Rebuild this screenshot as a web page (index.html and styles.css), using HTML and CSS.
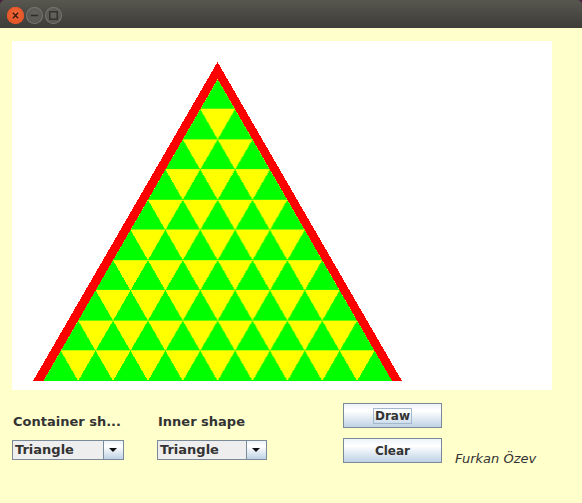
FILE: index.html
```html
<!DOCTYPE html>
<html>
<head>
<meta charset="utf-8">
<link rel="stylesheet" href="styles.css">
</head>
<body>
<div class="window">
  <div class="titlebar">
    <span class="wbtn close"><svg width="16" height="16" viewBox="0 0 16 16"><path d="M5.5 5.5 L10.5 10.5 M10.5 5.5 L5.5 10.5" stroke="#3a1a0e" stroke-width="1.3" fill="none"/></svg></span>
    <span class="wbtn"><svg width="16" height="16" viewBox="0 0 16 16"><path d="M4.5 8 H11.5" stroke="#2e2d2a" stroke-width="1.5" fill="none"/></svg></span>
    <span class="wbtn"><svg width="16" height="16" viewBox="0 0 16 16"><rect x="4.5" y="4.5" width="7" height="7" stroke="#2e2d2a" stroke-width="1.2" fill="none"/></svg></span>
  </div>
  <div class="content">
    <div class="canvas">
      <svg width="540" height="349" viewBox="0 0 540 349" shape-rendering="crispEdges">
        <defs>
          <pattern id="tri" patternUnits="userSpaceOnUse" x="205.65" y="38" width="34.87" height="60.4">
            <path fill="#ffff00" d="M0,0 L34.87,0 L17.435,30.2 Z M-17.435,30.2 L17.435,30.2 L0,60.4 Z M17.435,30.2 L52.305,30.2 L34.87,60.4 Z"/>
          </pattern>
        </defs>
        <polygon points="205.5,21 21,340 390,340" fill="#ff0000"/>
        <polygon points="205.65,38 31.3,340 380,340" fill="#00ff00"/>
        <polygon points="205.65,38 31.3,340 380,340" fill="url(#tri)"/>
      </svg>
    </div>
    <div class="controls">
      <div class="col col-container">
        <div class="label">Container sh...</div>
        <div class="combo combo-wide"><span class="combo-text">Triangle</span><span class="combo-arrow"></span></div>
      </div>
      <div class="col col-inner">
        <div class="label">Inner shape</div>
        <div class="combo combo-narrow"><span class="combo-text">Triangle</span><span class="combo-arrow"></span></div>
      </div>
      <div class="col col-buttons">
        <div class="button"><span class="focus">Draw</span></div>
        <div class="button">Clear</div>
      </div>
      <div class="col col-author">
        <div class="author">Furkan Özev</div>
      </div>
    </div>
  </div>
</div>
</body>
</html>
```
FILE: styles.css
```css
html, body {
  margin: 0;
  padding: 0;
}
body {
  background: #ffffcc;
  width: 582px;
  height: 503px;
  overflow: hidden;
  font-family: "DejaVu Sans", sans-serif;
}
.window {
  height: 503px;
  background: linear-gradient(#4a2140 0, #4a2140 6px, #ffffcc 6px);
}
.titlebar {
  height: 28px;
  background: linear-gradient(#57564f, #3d3c38);
  border-radius: 5px 5px 0 0;
  display: flex;
  align-items: center;
  padding-left: 7px;
  gap: 2px;
  box-sizing: border-box;
}
.wbtn {
  width: 17px;
  height: 17px;
  border-radius: 50%;
  background: radial-gradient(circle at 50% 40%, #64635e, #51504b);
  box-shadow: inset 0 0 0 1px #76756f;
  display: flex;
  align-items: center;
  justify-content: center;
  margin-top: 2px;
}
.wbtn svg {
  width: 17px;
  height: 17px;
}
.wbtn.close {
  background: radial-gradient(circle at 50% 40%, #f26a3c, #df4a1c);
  box-shadow: inset 0 0 0 1px #e8582a;
}
.content {
  background: #ffffcc;
  padding: 13px 0 0 12px;
}
.canvas {
  width: 540px;
  height: 349px;
  background: #ffffff;
}
.canvas svg {
  display: block;
}
.controls {
  display: flex;
  margin-top: 13px;
}
.col {
  display: flex;
  flex-direction: column;
}
.col-container {
  width: 145px;
}
.col-inner {
  width: 186px;
}
.col-buttons {
  width: 112px;
  gap: 10px;
}
.label {
  font-size: 13px;
  font-weight: bold;
  color: #333333;
  line-height: 15px;
  margin-top: 11px;
  padding-left: 1px;
}
.combo {
  margin-top: 11px;
  height: 20px;
  box-sizing: border-box;
  border: 1px solid #7a8a99;
  display: flex;
  background: #eeeeee;
}
.combo-wide {
  width: 112px;
}
.combo-narrow {
  width: 110px;
}
.combo-text {
  flex: 1;
  font-size: 13px;
  font-weight: bold;
  color: #333333;
  line-height: 18px;
  padding-left: 2px;
}
.combo-arrow {
  width: 19px;
  border-left: 1px solid #7a8a99;
  background: linear-gradient(#eef3f8, #ffffff 30%, #bfd2e5);
  position: relative;
}
.combo-arrow::after {
  content: "";
  position: absolute;
  left: 5px;
  top: 7px;
  border-left: 4px solid transparent;
  border-right: 4px solid transparent;
  border-top: 4px solid #111111;
}
.button {
  width: 99px;
  height: 25px;
  box-sizing: border-box;
  border: 1px solid #7a8a99;
  background: linear-gradient(#eef3f8, #ffffff 30%, #bfd2e5);
  display: flex;
  align-items: center;
  justify-content: center;
  font-size: 12px;
  font-weight: bold;
  color: #333333;
}
.focus {
  border: 1px solid #a3b8cc;
  padding: 0 1px;
  line-height: 14px;
}
.author {
  margin-top: 48px;
  font-size: 13px;
  font-style: italic;
  color: #333333;
  line-height: 15px;
}
```
